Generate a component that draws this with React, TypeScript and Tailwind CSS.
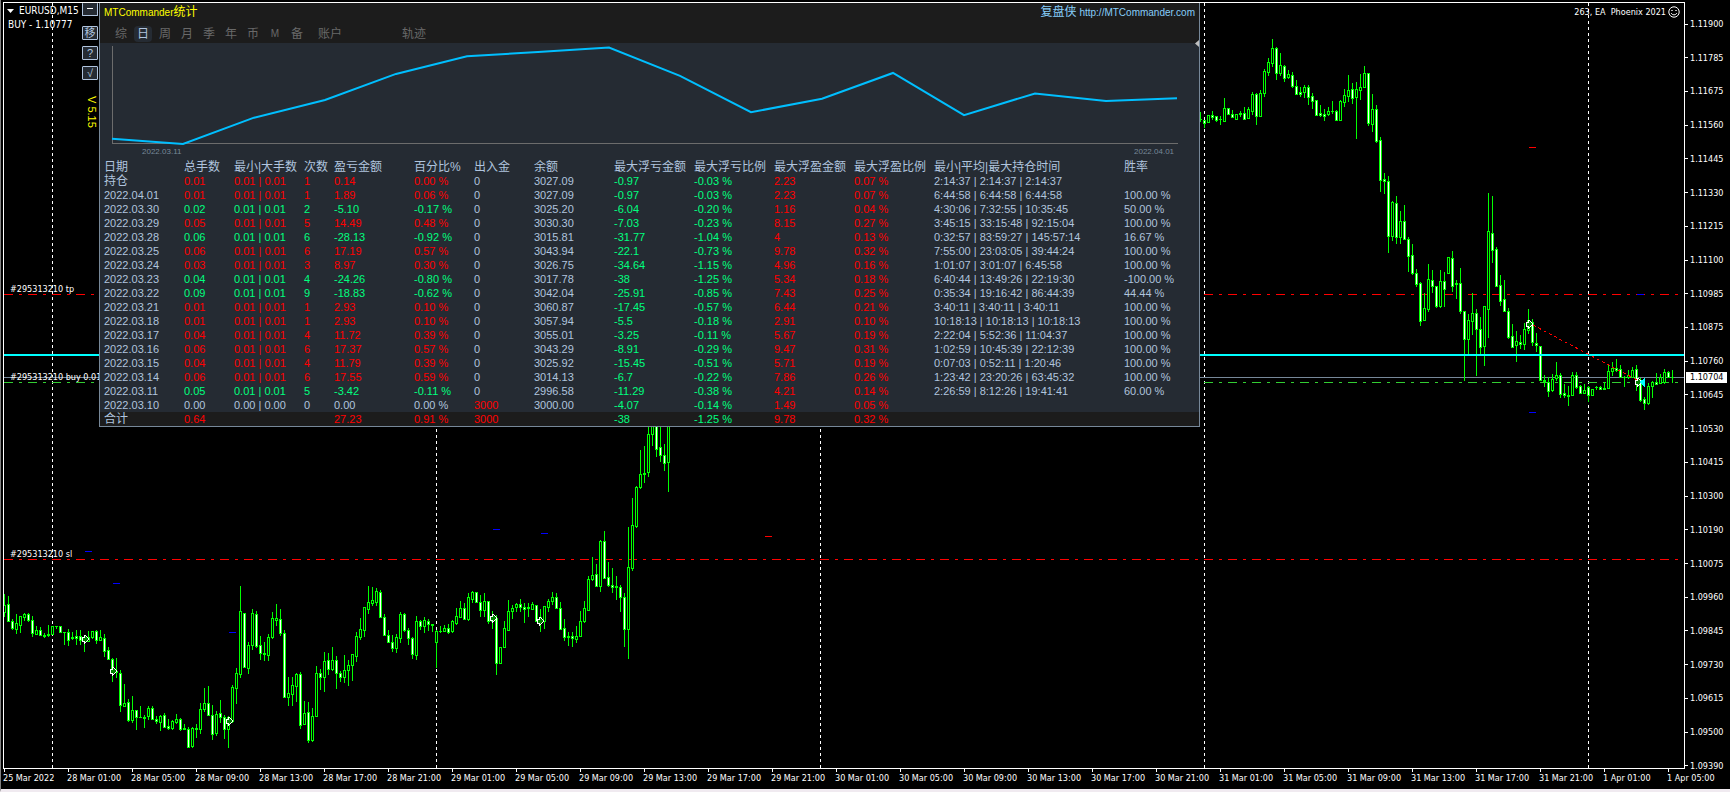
import { useId } from "react";

type Candle = [open: number, high: number, low: number, close: number];

type Tone = "up" | "down" | "flat";

type StatRow = {
  date: string;
  tone: Tone;
  lots: string;
  range: string;
  count: string;
  profit: string;
  percent: string;
  deposit: string;
  balance: string;
  maxLoss: string;
  maxLossPct: string;
  maxGain: string;
  maxGainPct: string;
  holding: string;
  winRate: string;
};

const STEP = 4;

// Canvas rows of open, high, low and close. Open above close is a falling bar.
const EARLY: Candle[] = [
  [612, 594, 617, 605], [604, 596, 621, 621], [621, 619, 630, 628], [629, 614, 634, 623], [625, 616, 633, 616],
  [617, 613, 621, 614], [614, 613, 622, 620], [620, 616, 637, 633], [634, 626, 635, 630], [630, 627, 636, 635],
  [635, 633, 638, 636], [635, 625, 637, 634], [634, 626, 634, 626], [626, 626, 629, 626], [626, 626, 633, 632],
  [632, 632, 645, 632], [632, 629, 646, 640], [638, 632, 640, 637], [636, 630, 645, 638], [636, 630, 645, 640],
  [637, 636, 652, 641], [641, 631, 642, 637], [637, 631, 639, 631], [631, 630, 644, 640], [640, 630, 640, 637],
  [638, 634, 657, 651], [650, 647, 660, 659], [659, 658, 682, 673], [671, 658, 678, 672], [673, 670, 712, 705],
  [706, 684, 707, 703], [702, 699, 722, 720], [720, 696, 723, 710], [710, 710, 730, 717], [717, 706, 718, 717],
  [718, 715, 728, 717], [716, 706, 720, 708], [708, 706, 720, 719], [719, 716, 724, 721], [722, 715, 731, 716],
  [715, 713, 728, 727], [726, 719, 730, 728], [728, 720, 730, 721], [722, 714, 724, 719], [719, 718, 731, 729],
  [728, 724, 730, 729], [729, 727, 748, 747], [746, 727, 748, 728], [728, 724, 738, 729], [729, 703, 734, 709],
  [709, 688, 712, 703], [703, 686, 716, 715], [715, 705, 740, 734], [733, 711, 736, 714], [713, 700, 723, 717],
  [717, 715, 739, 729], [729, 716, 748, 717], [721, 685, 723, 687], [688, 668, 704, 673], [674, 586, 678, 611],
  [613, 613, 668, 667], [668, 642, 674, 645], [645, 609, 650, 613], [614, 611, 648, 646], [645, 636, 660, 653],
  [653, 642, 661, 654], [655, 634, 661, 637], [637, 612, 639, 618], [620, 604, 626, 618], [619, 609, 636, 633],
  [633, 630, 697, 697], [697, 677, 706, 693], [694, 677, 706, 685], [686, 673, 702, 674], [674, 672, 729, 725],
  [724, 701, 724, 713], [712, 702, 743, 740], [740, 708, 742, 716], [716, 666, 717, 673], [673, 669, 690, 677],
  [677, 652, 692, 661], [660, 653, 675, 669], [669, 647, 671, 660], [660, 656, 689, 673], [673, 671, 682, 677],
  [677, 655, 683, 670], [670, 660, 686, 665], [665, 654, 681, 654], [656, 632, 662, 636], [637, 618, 640, 629],
  [630, 607, 637, 607], [609, 586, 614, 602], [603, 587, 606, 600], [602, 588, 606, 591], [592, 590, 618, 617],
  [617, 614, 635, 635], [635, 630, 643, 642], [642, 635, 652, 648], [648, 634, 653, 637], [638, 612, 643, 614],
  [614, 613, 632, 630], [630, 628, 645, 638], [638, 637, 659, 654], [655, 616, 660, 621], [621, 620, 630, 626],
  [626, 617, 633, 620], [621, 619, 631, 624], [624, 624, 632, 625], [642, 630, 668, 631], [631, 626, 633, 631],
  [631, 625, 632, 628], [628, 624, 634, 632], [631, 620, 633, 621], [623, 608, 625, 616], [617, 601, 618, 608],
  [608, 603, 620, 619], [619, 593, 621, 597], [599, 591, 603, 592], [592, 592, 603, 602], [602, 595, 617, 610],
  [610, 593, 617, 601], [601, 601, 624, 621], [621, 611, 629, 617], [618, 615, 675, 663], [663, 647, 664, 647],
  [647, 621, 647, 628], [630, 600, 630, 611], [611, 605, 619, 608], [607, 603, 612, 604], [604, 599, 612, 607],
  [607, 603, 623, 609], [607, 603, 617, 608], [609, 602, 610, 604], [605, 605, 622, 621], [617, 609, 632, 623],
  [621, 606, 629, 606], [607, 599, 612, 601], [601, 592, 605, 597], [597, 593, 609, 608], [608, 602, 629, 629],
  [628, 619, 641, 637], [636, 632, 646, 637], [636, 632, 647, 638], [639, 626, 643, 636], [636, 611, 637, 621],
  [621, 601, 623, 608], [610, 576, 610, 579], [579, 557, 581, 575], [574, 564, 587, 586], [586, 540, 592, 541],
  [541, 531, 579, 578], [577, 562, 587, 585], [585, 568, 593, 587], [586, 576, 600, 587], [587, 585, 612, 597],
  [597, 593, 647, 629], [629, 527, 659, 567], [568, 498, 571, 525], [526, 486, 528, 487], [487, 450, 489, 474],
  [474, 446, 483, 473], [472, 420, 477, 434], [434, 415, 446, 420], [420, 415, 457, 449], [447, 420, 462, 455],
  [455, 444, 471, 463], [462, 415, 492, 417],
];

const LATE_START = 299;

const LATE: Candle[] = [
  [119, 112, 122, 119], [120, 120, 128, 123], [122, 115, 122, 115], [115, 111, 120, 117], [116, 116, 122, 120],
  [119, 116, 125, 119], [121, 98, 121, 108], [108, 108, 115, 114], [114, 110, 118, 117], [119, 114, 119, 114],
  [114, 111, 117, 113], [113, 107, 120, 119], [118, 107, 119, 109], [111, 92, 115, 94], [94, 93, 125, 116],
  [116, 90, 116, 93], [93, 69, 97, 71], [72, 58, 76, 62], [63, 39, 67, 48], [48, 47, 80, 73],
  [73, 53, 76, 65], [66, 65, 82, 78], [77, 70, 79, 74], [75, 72, 88, 86], [86, 80, 95, 94],
  [92, 87, 97, 94], [92, 85, 98, 87], [87, 85, 105, 97], [96, 93, 109, 101], [100, 100, 115, 115],
  [113, 105, 117, 115], [114, 109, 121, 116], [114, 107, 116, 111], [111, 101, 114, 111], [111, 110, 121, 120],
  [120, 100, 121, 101], [102, 89, 107, 95], [96, 75, 102, 90], [89, 83, 104, 98], [97, 82, 139, 89],
  [90, 74, 100, 87], [87, 66, 88, 73], [73, 73, 126, 123], [124, 94, 132, 109], [109, 105, 143, 141],
  [140, 137, 192, 180], [179, 173, 194, 181], [181, 176, 253, 236], [236, 201, 241, 202], [203, 196, 244, 237],
  [237, 211, 244, 221], [221, 205, 240, 239], [239, 237, 272, 256], [255, 244, 275, 273], [273, 269, 287, 284],
  [283, 282, 326, 321], [320, 293, 320, 308], [309, 264, 312, 279], [280, 270, 293, 286], [286, 286, 308, 306],
  [306, 270, 308, 281], [281, 272, 307, 289], [273, 257, 273, 257], [258, 251, 292, 286], [283, 280, 299, 284],
  [283, 268, 314, 311], [311, 311, 381, 339], [339, 314, 355, 320], [321, 293, 335, 313], [313, 309, 376, 329],
  [329, 317, 356, 347], [346, 306, 366, 306], [309, 193, 338, 231], [233, 196, 263, 250], [249, 247, 287, 286],
  [285, 275, 306, 301], [299, 280, 312, 311], [311, 308, 339, 337], [336, 324, 348, 347], [345, 331, 362, 341],
  [342, 335, 349, 344], [344, 323, 350, 329], [330, 309, 334, 320], [322, 319, 346, 342], [343, 333, 352, 345],
  [346, 346, 381, 380], [380, 375, 387, 381], [382, 377, 397, 391], [390, 374, 392, 379], [378, 362, 381, 375],
  [375, 373, 398, 394], [393, 384, 398, 395], [395, 386, 406, 396], [395, 372, 396, 375], [375, 372, 389, 387],
  [386, 385, 394, 393], [393, 384, 394, 390], [387, 386, 402, 395], [395, 389, 396, 389], [387, 386, 390, 387],
  [387, 386, 390, 389], [389, 382, 390, 388], [388, 364, 389, 371], [371, 362, 376, 368], [368, 359, 372, 370],
  [369, 365, 378, 377], [377, 376, 387, 377], [377, 370, 379, 375], [377, 367, 378, 370], [369, 365, 391, 383],
  [383, 378, 402, 400], [399, 397, 410, 403], [403, 383, 405, 386], [386, 381, 398, 382], [382, 373, 385, 384],
  [383, 374, 384, 377], [382, 369, 384, 372], [372, 371, 378, 377], [377, 370, 383, 377],
];

const PRICES = [
  "1.11900", "1.11785", "1.11675", "1.11560", "1.11445", "1.11330", "1.11215", "1.11100",
  "1.10985", "1.10875", "1.10760", "1.10645", "1.10530", "1.10415", "1.10300", "1.10190",
  "1.10075", "1.09960", "1.09845", "1.09730", "1.09615", "1.09500", "1.09390",
];

const HOURS = ["01:00", "05:00", "09:00", "13:00", "17:00", "21:00"];

const TIMES = [
  "25 Mar 2022",
  ...["28", "29", "30", "31"].flatMap((day) => HOURS.map((hour) => `${day} Mar ${hour}`)),
  "1 Apr 01:00",
  "1 Apr 05:00",
];

const DAY_LINES = [52, 436, 820, 1204, 1588];

const ENTRIES = [[85, 639], [113, 671], [229, 721], [493, 618], [540, 621], [1529, 324], [1638, 382]];

const STOPS = [
  { x: 85, y: 551, color: "#0000ff" },
  { x: 113, y: 583, color: "#0000ff" },
  { x: 229, y: 632, color: "#0000ff" },
  { x: 493, y: 529, color: "#0000ff" },
  { x: 541, y: 533, color: "#0000ff" },
  { x: 765, y: 536, color: "#ff0000" },
  { x: 1529, y: 147, color: "#ff0000" },
  { x: 1529, y: 412, color: "#0000ff" },
  { x: 1637, y: 294, color: "#0000ff" },
];

const BALANCES = [
  3000, 2996.58, 3014.13, 3025.92, 3043.29, 3055.01, 3057.94, 3060.87,
  3042.04, 3017.78, 3026.75, 3043.94, 3015.81, 3030.3, 3025.2, 3027.09,
];

const COLUMNS = [
  { label: "日期", width: "w-[84px]" },
  { label: "总手数", width: "w-[50px]" },
  { label: "最小|大手数", width: "w-[70px]" },
  { label: "次数", width: "w-[30px]" },
  { label: "盈亏金额", width: "w-[80px]" },
  { label: "百分比%", width: "w-[60px]" },
  { label: "出入金", width: "w-[60px]" },
  { label: "余额", width: "w-[80px]" },
  { label: "最大浮亏金额", width: "w-[80px]" },
  { label: "最大浮亏比例", width: "w-[80px]" },
  { label: "最大浮盈金额", width: "w-[80px]" },
  { label: "最大浮盈比例", width: "w-[80px]" },
  { label: "最小|平均|最大持仓时间", width: "w-[190px]" },
  { label: "胜率", width: "" },
];

function row(date: string, tone: Tone, values: string): StatRow {
  const [lots, range, count, profit, percent, deposit, balance, maxLoss, maxLossPct, maxGain, maxGainPct, holding, winRate] =
    values.split(";");
  return { date, tone, lots, range, count, profit, percent, deposit, balance, maxLoss, maxLossPct, maxGain, maxGainPct, holding, winRate };
}

const ROWS: StatRow[] = [
  row("持仓", "up", "0.01;0.01 | 0.01;1;0.14;0.00 %;0;3027.09;-0.97;-0.03 %;2.23;0.07 %;2:14:37 | 2:14:37 | 2:14:37;"),
  row("2022.04.01", "up", "0.01;0.01 | 0.01;1;1.89;0.06 %;0;3027.09;-0.97;-0.03 %;2.23;0.07 %;6:44:58 | 6:44:58 | 6:44:58;100.00 %"),
  row("2022.03.30", "down", "0.02;0.01 | 0.01;2;-5.10;-0.17 %;0;3025.20;-6.04;-0.20 %;1.16;0.04 %;4:30:06 | 7:32:55 | 10:35:45;50.00 %"),
  row("2022.03.29", "up", "0.05;0.01 | 0.01;5;14.49;0.48 %;0;3030.30;-7.03;-0.23 %;8.15;0.27 %;3:45:15 | 33:15:48 | 92:15:04;100.00 %"),
  row("2022.03.28", "down", "0.06;0.01 | 0.01;6;-28.13;-0.92 %;0;3015.81;-31.77;-1.04 %;4;0.13 %;0:32:57 | 83:59:27 | 145:57:14;16.67 %"),
  row("2022.03.25", "up", "0.06;0.01 | 0.01;6;17.19;0.57 %;0;3043.94;-22.1;-0.73 %;9.78;0.32 %;7:55:00 | 23:03:05 | 39:44:24;100.00 %"),
  row("2022.03.24", "up", "0.03;0.01 | 0.01;3;8.97;0.30 %;0;3026.75;-34.64;-1.15 %;4.96;0.16 %;1:01:07 | 3:01:07 | 6:45:58;100.00 %"),
  row("2022.03.23", "down", "0.04;0.01 | 0.01;4;-24.26;-0.80 %;0;3017.78;-38;-1.25 %;5.34;0.18 %;6:40:44 | 13:49:26 | 22:19:30;-100.00 %"),
  row("2022.03.22", "down", "0.09;0.01 | 0.01;9;-18.83;-0.62 %;0;3042.04;-25.91;-0.85 %;7.43;0.25 %;0:35:34 | 19:16:42 | 86:44:39;44.44 %"),
  row("2022.03.21", "up", "0.01;0.01 | 0.01;1;2.93;0.10 %;0;3060.87;-17.45;-0.57 %;6.44;0.21 %;3:40:11 | 3:40:11 | 3:40:11;100.00 %"),
  row("2022.03.18", "up", "0.01;0.01 | 0.01;1;2.93;0.10 %;0;3057.94;-5.5;-0.18 %;2.91;0.10 %;10:18:13 | 10:18:13 | 10:18:13;100.00 %"),
  row("2022.03.17", "up", "0.04;0.01 | 0.01;4;11.72;0.39 %;0;3055.01;-3.25;-0.11 %;5.67;0.19 %;2:22:04 | 5:52:36 | 11:04:37;100.00 %"),
  row("2022.03.16", "up", "0.06;0.01 | 0.01;6;17.37;0.57 %;0;3043.29;-8.91;-0.29 %;9.47;0.31 %;1:02:59 | 10:45:39 | 22:12:39;100.00 %"),
  row("2022.03.15", "up", "0.04;0.01 | 0.01;4;11.79;0.39 %;0;3025.92;-15.45;-0.51 %;5.71;0.19 %;0:07:03 | 0:52:11 | 1:20:46;100.00 %"),
  row("2022.03.14", "up", "0.06;0.01 | 0.01;6;17.55;0.59 %;0;3014.13;-6.7;-0.22 %;7.86;0.26 %;1:23:42 | 23:20:26 | 63:45:32;100.00 %"),
  row("2022.03.11", "down", "0.05;0.01 | 0.01;5;-3.42;-0.11 %;0;2996.58;-11.29;-0.38 %;4.21;0.14 %;2:26:59 | 8:12:26 | 19:41:41;60.00 %"),
  row("2022.03.10", "flat", "0.00;0.00 | 0.00;0;0.00;0.00 %;3000;3000.00;-4.07;-0.14 %;1.49;0.05 %;;"),
  row("合计", "up", "0.64;;;27.23;0.91 %;3000;;-38;-1.25 %;9.78;0.32 %;;"),
];

const TONES: Record<Tone, string> = {
  up: "text-[#ff0000]",
  down: "text-[#00ff7f]",
  flat: "text-[#b0c4de]",
};

const TABS = ["综", "日", "周", "月", "季", "年", "币", "M", "备"];

function cx(...parts: Array<string | false | null | undefined>) {
  return parts.filter(Boolean).join(" ");
}

function Candles({ data, start }: { data: Candle[]; start: number }) {
  return (
    <g>
      {data.map(([open, high, low, close], i) => {
        const x = 4 + (start + i) * STEP;
        const top = Math.min(open, close);
        const size = Math.abs(close - open);
        return (
          <g key={i}>
            <rect x={x} y={high} width={1} height={Math.max(low - high, 1)} fill="#00ff00" />
            <rect x={x - 1} y={top} width={3} height={size + 1} fill="#00ff00" />
            {size > 1 && <rect x={x} y={top + 1} width={1} height={size - 1} fill={open < close ? "#ffffff" : "#000000"} />}
          </g>
        );
      })}
    </g>
  );
}

function PriceChart() {
  return (
    <svg className="absolute inset-0 h-full w-full" role="img" aria-label="EURUSD M15 candles">
      <g transform="translate(-4 -3)" shapeRendering="crispEdges">
        {DAY_LINES.map((x) => (
          <path key={x} d={`M${x + 0.5} 3V768`} stroke="#ffffff" strokeDasharray="3 3" />
        ))}
        <path d="M4 294.5H1684" stroke="#ff0000" strokeDasharray="9 6 3 6" />
        <path d="M4 559.5H1684" stroke="#ff0000" strokeDasharray="9 6 3 6" />
        <path d="M4 382.5H1684" stroke="#32cd32" strokeDasharray="9 6 3 6" />
        <path d="M4 377.5H1684" stroke="#778899" />
        <Candles data={EARLY} start={0} />
        <Candles data={LATE} start={LATE_START} />
        <path d="M4 355H1684" stroke="#00ffff" strokeWidth={2} />
        <path d="M1533 325L1637 380" stroke="#ff0000" strokeDasharray="3 3" />
        {STOPS.map((s) => (
          <rect key={`${s.x}-${s.y}`} x={s.x} y={s.y} width={7} height={1} fill={s.color} />
        ))}
        {ENTRIES.map(([x, y]) => (
          <path
            key={x}
            transform={`translate(${x} ${y})`}
            d="M-3 -2H-1V-4H0L4 0L0 4H-1V2H-3Z"
            fill="#008000"
            stroke="#ffffff"
          />
        ))}
        <path d="M1645 378V387L1639 382Z" fill="#00ffff" />
      </g>
      <g transform="translate(-4 -3)" fill="#ffffff" className="text-[9px]">
        <text x={10} y={292}>#295313210 tp</text>
        <text x={10} y={380}>#295313210 buy 0.01</text>
        <text x={10} y={557}>#295313210 sl</text>
      </g>
    </svg>
  );
}

function BalanceChart() {
  const points = BALANCES.map((v, i) => `${12 + i * 71},${101 - (v - 2996.58) * 1.5}`).join(" ");

  return (
    <svg className="block h-[117px] w-full" role="img" aria-label="Balance curve">
      <path d="M12.5 3V100.5H1078" fill="none" stroke="#6c6c6c" shapeRendering="crispEdges" />
      <polyline points={points} fill="none" stroke="#00bfff" strokeWidth={2} />
      <g fill="#778899" className="text-[8px]">
        <text x={42} y={111}>2022.03.11</text>
        <text x={1034} y={111}>2022.04.01</text>
      </g>
    </svg>
  );
}

function StatsTable() {
  return (
    <table className="w-full table-fixed border-collapse text-left text-[11px] leading-[14px] whitespace-nowrap text-[#b0c4de]">
      <thead>
        <tr className="h-[14px] text-[12px]">
          {COLUMNS.map((c, i) => (
            <th key={c.label} scope="col" className={cx("p-0 font-normal", i === 0 && "pl-1", c.width)}>
              {c.label}
            </th>
          ))}
        </tr>
      </thead>
      <tbody>
        {ROWS.map((r) => {
          const tone = TONES[r.tone];
          return (
            <tr key={r.date} className={cx("h-[14px]", r.date === "合计" && "bg-[#1c1c1c]")}>
              <th scope="row" className={cx("p-0 pl-1 font-normal", !r.date.startsWith("2") && "text-[12px]")}>
                {r.date}
              </th>
              <td className={cx("p-0", tone)}>{r.lots}</td>
              <td className={cx("p-0", tone)}>{r.range}</td>
              <td className={cx("p-0", tone)}>{r.count}</td>
              <td className={cx("p-0", tone)}>{r.profit}</td>
              <td className={cx("p-0", tone)}>{r.percent}</td>
              <td className={cx("p-0", r.deposit !== "0" && TONES.up)}>{r.deposit}</td>
              <td className="p-0">{r.balance}</td>
              <td className="p-0 text-[#00ff7f]">{r.maxLoss}</td>
              <td className="p-0 text-[#00ff7f]">{r.maxLossPct}</td>
              <td className="p-0 text-[#ff0000]">{r.maxGain}</td>
              <td className="p-0 text-[#ff0000]">{r.maxGainPct}</td>
              <td className="p-0">{r.holding}</td>
              <td className="p-0">{r.winRate}</td>
            </tr>
          );
        })}
      </tbody>
    </table>
  );
}

function StatsPanel() {
  const titleId = useId();

  return (
    <section
      aria-labelledby={titleId}
      className="absolute top-0 left-[95px] w-[1101px] border-x border-b border-[#778899] bg-[#252b33] font-['Liberation_Sans','Noto_Sans_CJK_SC',sans-serif]"
    >
      <header className="flex h-10 flex-col justify-between bg-[#1c1c1c] px-1">
        <div className="flex items-center justify-between pt-px text-[10px] leading-4">
          <h1 id={titleId} className="text-[#ffff00]">
            MTCommander<span className="text-[12px]">统计</span>
          </h1>
          <a href="http://MTCommander.com" className="text-[#87cefa]">
            <span className="text-[12px]">复盘侠</span> http://MTCommander.com
          </a>
        </div>
        <nav className="flex gap-1 pb-px pl-2 text-[12px] leading-4 text-[#696969]">
          {TABS.map((t) => (
            <button
              key={t}
              type="button"
              className={cx("h-4 w-[18px] rounded-sm", t === "日" && "bg-[#252b33] text-[#b0c4de]", t === "M" && "text-[10px]")}
            >
              {t}
            </button>
          ))}
          <button type="button" className="ml-1 h-4 w-8">账户</button>
          <button type="button" className="ml-8 h-4 w-16">轨迹</button>
        </nav>
      </header>
      <BalanceChart />
      <StatsTable />
      <svg className="absolute top-[37px] right-0 h-[7px] w-1" viewBox="0 0 4 7" aria-hidden="true">
        <path d="M4 0V7L0 3.5Z" fill="#c0c0c0" />
      </svg>
    </section>
  );
}

function SideButtons() {
  const base = "h-[14px] w-4 rounded-[1px] border border-[#b0c4de] bg-[#252b33] text-[11px] leading-3 text-[#b0c4de]";

  return (
    <div className="absolute top-0 left-[78px] flex flex-col items-end gap-[6px] font-['Liberation_Sans','Noto_Sans_CJK_SC',sans-serif]">
      <button type="button" aria-label="Minimize" className="mb-1 flex h-[13px] w-4 justify-center rounded-[1px] border border-t-0 border-[#b0c4de] bg-[#252b33] pt-[5px]">
        <span className="h-px w-[6px] bg-white" />
      </button>
      <button type="button" className={base}>移</button>
      <button type="button" className={base}>?</button>
      <button type="button" className={base}>√</button>
      <span className="mt-[10px] text-[11px] leading-3 text-[#ffff00] [writing-mode:vertical-rl]">V 5.15</span>
    </div>
  );
}

function PriceAxis() {
  return (
    <aside className="relative flex w-[45px] shrink-0 flex-col justify-between pt-4 pb-[17px]" aria-label="Price scale">
      {PRICES.map((p) => (
        <div key={p} className="flex h-3 items-center gap-[2px] leading-3">
          <span className="h-px w-[3px] bg-white" />
          {p}
        </div>
      ))}
      <div className="absolute top-[370px] left-px h-[11px] w-[41px] bg-white pl-[4px] leading-[11px] text-black">1.10704</div>
    </aside>
  );
}

function TimeAxis() {
  return (
    <footer className="flex h-5 whitespace-nowrap">
      {TIMES.map((t) => (
        <div key={t} className="flex w-16 shrink-0 flex-col">
          <span className="ml-px h-[3px] w-px bg-white" />
          <span className="leading-3">{t}</span>
        </div>
      ))}
    </footer>
  );
}

export default function App() {
  return (
    <div className="flex min-h-screen overflow-hidden border-b-[3px] border-l border-b-[#f0eaf0] border-l-[#808080] bg-black pt-[2px] pl-[2px] font-['DejaVu_Sans_Condensed','Noto_Sans',sans-serif] text-[9px] text-white">
      <div className="flex min-w-0 flex-1 flex-col">
        <main className="relative flex-1 overflow-hidden border border-white">
          <PriceChart />
          <div className="absolute top-px left-[3px]">
            <div className="flex items-center gap-[5px] text-[10px] leading-[14px]">
              <svg className="h-1 w-[7px]" viewBox="0 0 7 4" aria-hidden="true">
                <path d="M0 0H7L3.5 4Z" fill="#ffffff" />
              </svg>
              EURUSD,M15
            </div>
            <div className="pl-px text-[10px] leading-[14px]">BUY - 1.10777</div>
          </div>
          <div className="absolute top-[3px] right-1 flex items-center gap-[2px] leading-3">
            <span className="whitespace-pre">263, EA  Phoenix 2021</span>
            <svg className="h-3 w-3" viewBox="0 0 12 12" fill="none" stroke="#ffffff" aria-hidden="true">
              <circle cx="6" cy="6" r="5.2" />
              <path d="M3.2 7C4 9.4 8 9.4 8.8 7" />
              <path d="M4 4V5M8 4V5" strokeWidth="1.4" />
            </svg>
          </div>
          <SideButtons />
          <StatsPanel />
        </main>
        <TimeAxis />
      </div>
      <PriceAxis />
    </div>
  );
}
